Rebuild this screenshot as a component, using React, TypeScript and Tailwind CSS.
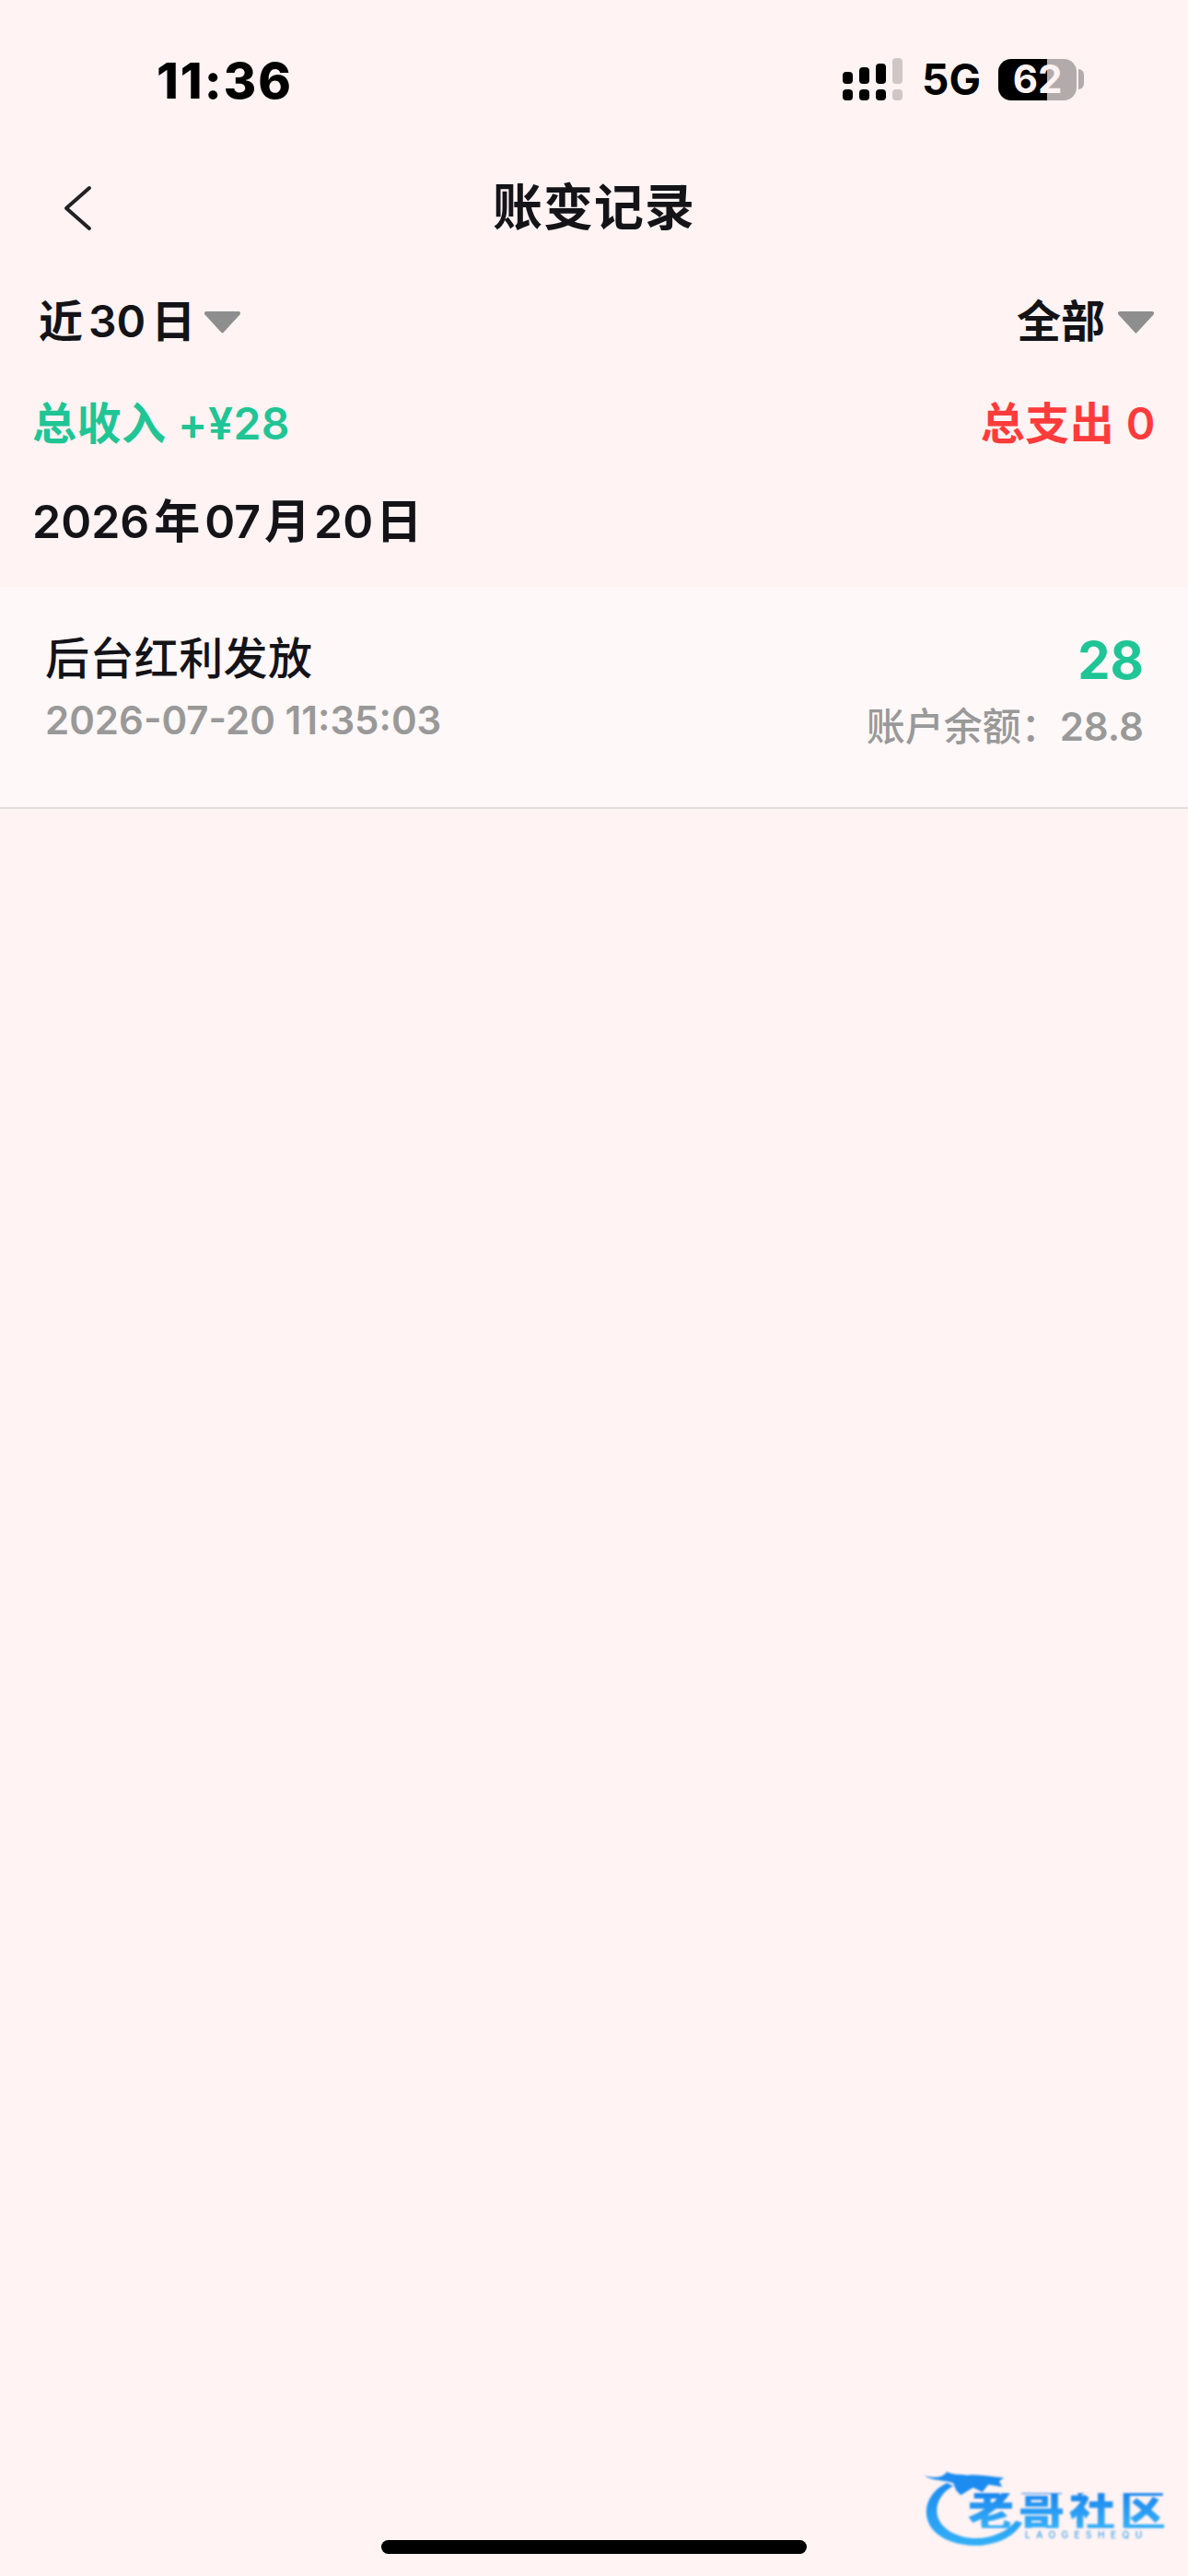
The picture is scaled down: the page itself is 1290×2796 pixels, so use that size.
const sans = "font-['Inter','Noto_Sans_CJK_SC',sans-serif]"

const signalBars = [
  { top: "h-[13px]", tone: "bg-black" },
  { top: "h-[18px]", tone: "bg-black" },
  { top: "h-[22px]", tone: "bg-black" },
  { top: "h-[28px]", tone: "bg-[#cfc7c7]" },
]

function Signal() {
  return (
    <div className="flex h-[46px] items-end gap-[7px]">
      {signalBars.map((bar, i) => (
        <div key={i} className="flex w-[11px] flex-col gap-[6px]">
          <div className={`${bar.top} ${bar.tone} rounded-[4px]`} />
          <div className={`h-[12px] ${bar.tone} rounded-[4px]`} />
        </div>
      ))}
    </div>
  )
}

function Battery() {
  return (
    <div className="flex items-center gap-[2px]">
      <div className="flex h-[45px] w-[85px] items-center justify-center rounded-[14px] bg-[linear-gradient(90deg,#000_53px,#b3abab_53px)]">
        <span className="text-[42px] leading-none font-bold text-[#fff3f3]">62</span>
      </div>
      <div className="h-[22px] w-[6px] rounded-r-full bg-[#b3abab]" />
    </div>
  )
}

function StatusBar() {
  return (
    <div className="flex h-[174px] items-start justify-between pt-[60px] pr-[113px] pl-[170px] text-black">
      <span className="text-[54px] leading-[56px] font-extrabold tracking-[2px]">11:36</span>
      <div className="flex items-center pt-[3px]">
        <Signal />
        <span className="mr-[19px] ml-[21px] text-[46px] leading-none font-bold">5G</span>
        <Battery />
      </div>
    </div>
  )
}

function Caret() {
  return (
    <svg width="41" height="25" viewBox="0 0 41 25" aria-hidden>
      <path d="M3 1h35a2 2 0 0 1 1.5 3.4L22 23.6a2 2 0 0 1-3 0L1.5 4.4A2 2 0 0 1 3 1z" fill="#8e8e8e" />
    </svg>
  )
}

function NavBar() {
  return (
    <div className="relative flex h-[104px] items-center justify-center">
      <svg className="absolute top-[26px] left-[67px]" width="34" height="52" viewBox="0 0 34 52" fill="none" aria-hidden>
        <path d="M30 4 L5 26 L30 48" stroke="#222226" strokeWidth="4" strokeLinecap="round" strokeLinejoin="round" />
      </svg>
      <h1 className="text-[54px] leading-none font-bold tracking-[1px] text-[#131318]">账变记录</h1>
    </div>
  )
}

function Filters() {
  return (
    <div className="mt-[35px] flex h-[72px] items-center justify-between pr-[36px] pl-[42px] text-[#131318]">
      <div className="flex items-center gap-[9px]">
        <span className="text-[48px] leading-none font-semibold">
          近<span className="mx-[6px]">30</span>日
        </span>
        <Caret />
      </div>
      <div className="flex items-center gap-[13px]">
        <span className="text-[48px] leading-none font-semibold">全部</span>
        <Caret />
      </div>
    </div>
  )
}

function Totals() {
  return (
    <div className="mt-[50px] flex h-[50px] items-center justify-between pr-[35px] pl-[35px] text-[48px] leading-none font-semibold tracking-[0.5px]">
      <span className="text-[#1fc595]">总收入 +¥28</span>
      <span className="text-[#ff3b3b]">总支出 0</span>
    </div>
  )
}

function Transaction() {
  return (
    <div className="flex h-[241px] items-start justify-between border-b-2 border-[#e3dfdf] bg-[#fff8f8] pt-[52px] pr-[48px] pl-[49px]">
      <div>
        <p className="text-[48px] leading-[52px] font-medium tracking-[0.4px] text-[#131318]">后台红利发放</p>
        <p className="mt-[18px] text-[42px] leading-[46px] font-semibold text-[#999999]">2026-07-20 11:35:03</p>
      </div>
      <div className="flex flex-col items-end">
        <p className="text-[56px] leading-[56px] font-bold text-[#1fc595]">28</p>
        <p className="mt-[21px] text-[42px] leading-[46px] font-medium text-[#999999]">
          账户余额：<span className="font-semibold">28.8</span>
        </p>
      </div>
    </div>
  )
}

// watermark badge in the bottom corner: dragon crescent plus wordmark
function Watermark() {
  return (
    <div className="absolute right-0 bottom-0 h-[156px] w-[330px] blur-[0.8px]">
      <svg className="absolute inset-0" width="330" height="156" viewBox="0 0 990 468" aria-hidden>
        <defs>
          <linearGradient id="crescent" x1="0" y1="0" x2="0" y2="1">
            <stop offset="0" stopColor="#1c8cf0" />
            <stop offset="1" stopColor="#33b0f7" />
          </linearGradient>
        </defs>
        <path
          d="M205 165C150 190 130 240 140 280C155 345 240 375 320 368C375 362 425 340 450 295L430 288C400 325 350 345 300 345C235 345 175 310 172 260C170 225 190 195 225 175Z"
          fill="url(#crescent)"
        />
        <path
          d="M130 140C160 150 190 150 205 128C220 140 250 135 270 140C310 135 350 145 390 148L375 160L385 178L340 170L320 195L290 180L250 205L235 190L225 165C190 155 155 158 130 140Z"
          fill="#1c8cf0"
        />
      </svg>
      <div className="absolute top-[66px] left-[91px] bg-linear-to-b from-[#1a86ee] to-[#37b0f8] bg-clip-text text-[50px] leading-[38px] font-black tracking-[5px] whitespace-nowrap text-transparent">
        老哥社区
      </div>
      <div className="absolute top-[106px] left-[153px] text-[10px] leading-[10px] font-medium tracking-[6.5px] whitespace-nowrap text-[#3ea3ea]">
        LAOGESHEQU
      </div>
    </div>
  )
}

export default function App() {
  return (
    <div className={`relative flex h-[2796px] w-[1290px] flex-col overflow-hidden bg-[#fff3f3] ${sans}`}>
      <StatusBar />
      <NavBar />
      <Filters />
      <Totals />
      <div className="flex h-[152px] items-start pt-[53px] pl-[35px] text-[50px] leading-[56px] font-semibold text-[#131318]">
        <span>
          2026<span className="mx-[5px]">年</span>07<span className="mx-[4px]">月</span>20<span className="ml-[3px]">日</span>
        </span>
      </div>
      <Transaction />
      <Watermark />
      <div className="absolute top-[2757px] left-[414px] h-[15px] w-[462px] rounded-full bg-black" />
    </div>
  )
}
